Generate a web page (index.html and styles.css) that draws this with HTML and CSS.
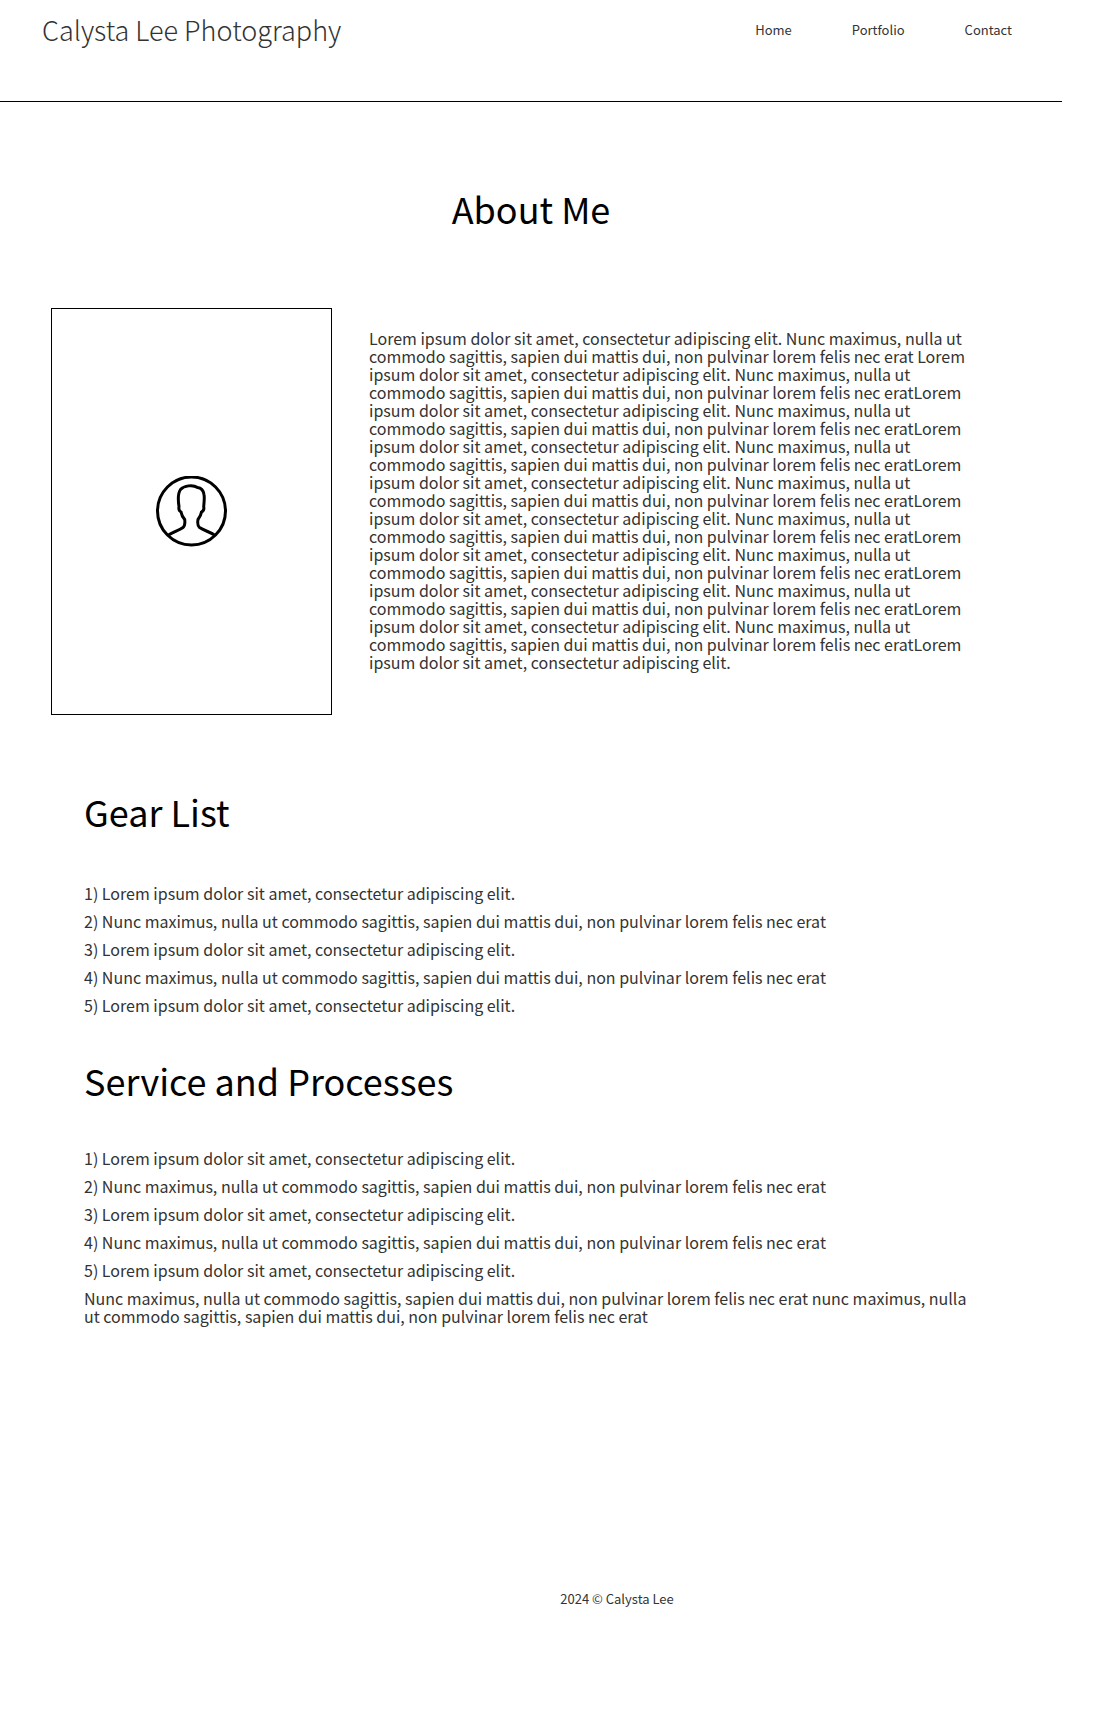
FILE: index.html
```html
<!DOCTYPE html>
<html lang="en">
<head>
  <meta charset="utf-8">
  <meta name="viewport" content="width=device-width, initial-scale=1">
  <title>Calysta Lee Photography</title>
  <link rel="stylesheet" href="styles.css">
</head>
<body>
  <header class="site-header">
    <p class="site-title">Calysta Lee Photography</p>
    <nav class="site-nav">
      <a href="#">Home</a>
      <a href="#">Portfolio</a>
      <a href="#">Contact</a>
    </nav>
  </header>
  <main>
    <h1 class="heading page-heading">About Me</h1>
    <section class="about">
      <div class="portrait">
        <svg class="portrait-icon" viewBox="0 1 72 72" fill="none" stroke="#000" stroke-width="3" aria-hidden="true">
          <circle cx="35.500" cy="36" r="34"/>
          <path d="M12.500 60C17 57 23 55.500 27 52.500C29.500 50.500 29 47.500 28.700 44.500C26.500 42 25.500 40 25 37C23 36 22.600 34 23 31.500C22 25 22 18 24.500 14.500C28 10.500 37 9.500 41.500 12.500C45.500 13 47.500 16 48 19.500C48.700 23 48 28 47.700 31.500C48.200 34 47.500 36 45.500 37C45 40 44 42 42 44.500C41.500 47.500 41 50.500 43.500 52.500C48 55.500 54 57 58.500 60"/>
        </svg>
      </div>
      <p class="bio">Lorem ipsum dolor sit amet, consectetur adipiscing elit. Nunc maximus, nulla ut commodo sagittis, sapien dui mattis dui, non pulvinar lorem felis nec erat Lorem ipsum dolor sit amet, consectetur adipiscing elit. Nunc maximus, nulla ut commodo sagittis, sapien dui mattis dui, non pulvinar lorem felis nec eratLorem ipsum dolor sit amet, consectetur adipiscing elit. Nunc maximus, nulla ut commodo sagittis, sapien dui mattis dui, non pulvinar lorem felis nec eratLorem ipsum dolor sit amet, consectetur adipiscing elit. Nunc maximus, nulla ut commodo sagittis, sapien dui mattis dui, non pulvinar lorem felis nec eratLorem ipsum dolor sit amet, consectetur adipiscing elit. Nunc maximus, nulla ut commodo sagittis, sapien dui mattis dui, non pulvinar lorem felis nec eratLorem ipsum dolor sit amet, consectetur adipiscing elit. Nunc maximus, nulla ut commodo sagittis, sapien dui mattis dui, non pulvinar lorem felis nec eratLorem ipsum dolor sit amet, consectetur adipiscing elit. Nunc maximus, nulla ut commodo sagittis, sapien dui mattis dui, non pulvinar lorem felis nec eratLorem ipsum dolor sit amet, consectetur adipiscing elit. Nunc maximus, nulla ut commodo sagittis, sapien dui mattis dui, non pulvinar lorem felis nec eratLorem ipsum dolor sit amet, consectetur adipiscing elit. Nunc maximus, nulla ut commodo sagittis, sapien dui mattis dui, non pulvinar lorem felis nec eratLorem ipsum dolor sit amet, consectetur adipiscing elit.</p>
    </section>
    <section class="details">
      <h2 class="heading">Gear List</h2>
      <div class="entries">
        <p>1) Lorem ipsum dolor sit amet, consectetur adipiscing elit.</p>
        <p>2) Nunc maximus, nulla ut commodo sagittis, sapien dui mattis dui, non pulvinar lorem felis nec erat</p>
        <p>3) Lorem ipsum dolor sit amet, consectetur adipiscing elit.</p>
        <p>4) Nunc maximus, nulla ut commodo sagittis, sapien dui mattis dui, non pulvinar lorem felis nec erat</p>
        <p>5) Lorem ipsum dolor sit amet, consectetur adipiscing elit.</p>
      </div>
    </section>
    <section class="details services">
      <h2 class="heading">Service and Processes</h2>
      <div class="entries">
        <p>1) Lorem ipsum dolor sit amet, consectetur adipiscing elit.</p>
        <p>2) Nunc maximus, nulla ut commodo sagittis, sapien dui mattis dui, non pulvinar lorem felis nec erat</p>
        <p>3) Lorem ipsum dolor sit amet, consectetur adipiscing elit.</p>
        <p>4) Nunc maximus, nulla ut commodo sagittis, sapien dui mattis dui, non pulvinar lorem felis nec erat</p>
        <p>5) Lorem ipsum dolor sit amet, consectetur adipiscing elit.</p>
        <p>Nunc maximus, nulla ut commodo sagittis, sapien dui mattis dui, non pulvinar lorem felis nec erat nunc maximus, nulla ut commodo sagittis, sapien dui mattis dui, non pulvinar lorem felis nec erat</p>
      </div>
    </section>
  </main>
  <footer class="site-footer">2024 © Calysta Lee</footer>
</body>
</html>
```
FILE: styles.css
```css
* {
  box-sizing: border-box;
}

body {
  margin: 0 40px 0 0;
  background: #fff;
  color: #333;
  font-family: "Noto Sans CJK SC", "Noto Sans", sans-serif;
  font-size: 16px;
  line-height: 18px;
}

p,
h1,
h2 {
  margin: 0;
}

.site-header {
  display: flex;
  justify-content: space-between;
  align-items: flex-start;
  padding: 12px 50px 53px 42px;
  border-bottom: 1px solid #000;
}

.site-title {
  font-size: 27px;
  font-weight: 200;
  line-height: 36px;
}

.site-nav {
  display: flex;
  gap: 60px;
  padding-top: 9px;
  font-size: 13px;
}

.site-nav a {
  color: inherit;
  text-decoration: none;
}

.heading {
  color: #000;
  font-size: 36px;
  font-weight: 400;
  line-height: 36px;
}

.page-heading {
  padding: 88px 0 82px;
  text-align: center;
}

.about {
  display: flex;
  align-items: flex-start;
  gap: 37px;
  padding: 0 80px 0 51px;
}

.portrait {
  display: flex;
  flex: none;
  align-items: center;
  justify-content: center;
  width: 281px;
  height: 407px;
  border: 1px solid #000;
}

.portrait-icon {
  width: 72px;
  height: 72px;
}

.bio {
  flex: 1;
  padding-top: 21px;
}

.details {
  display: flex;
  flex-direction: column;
  gap: 55px;
  padding: 78px 80px 0 84px;
}

.services {
  gap: 51px;
  padding-top: 48px;
}

.entries {
  display: flex;
  flex-direction: column;
  gap: 10px;
}

.site-footer {
  padding: 265px 0 100px 172px;
  font-size: 13px;
  text-align: center;
}
```
